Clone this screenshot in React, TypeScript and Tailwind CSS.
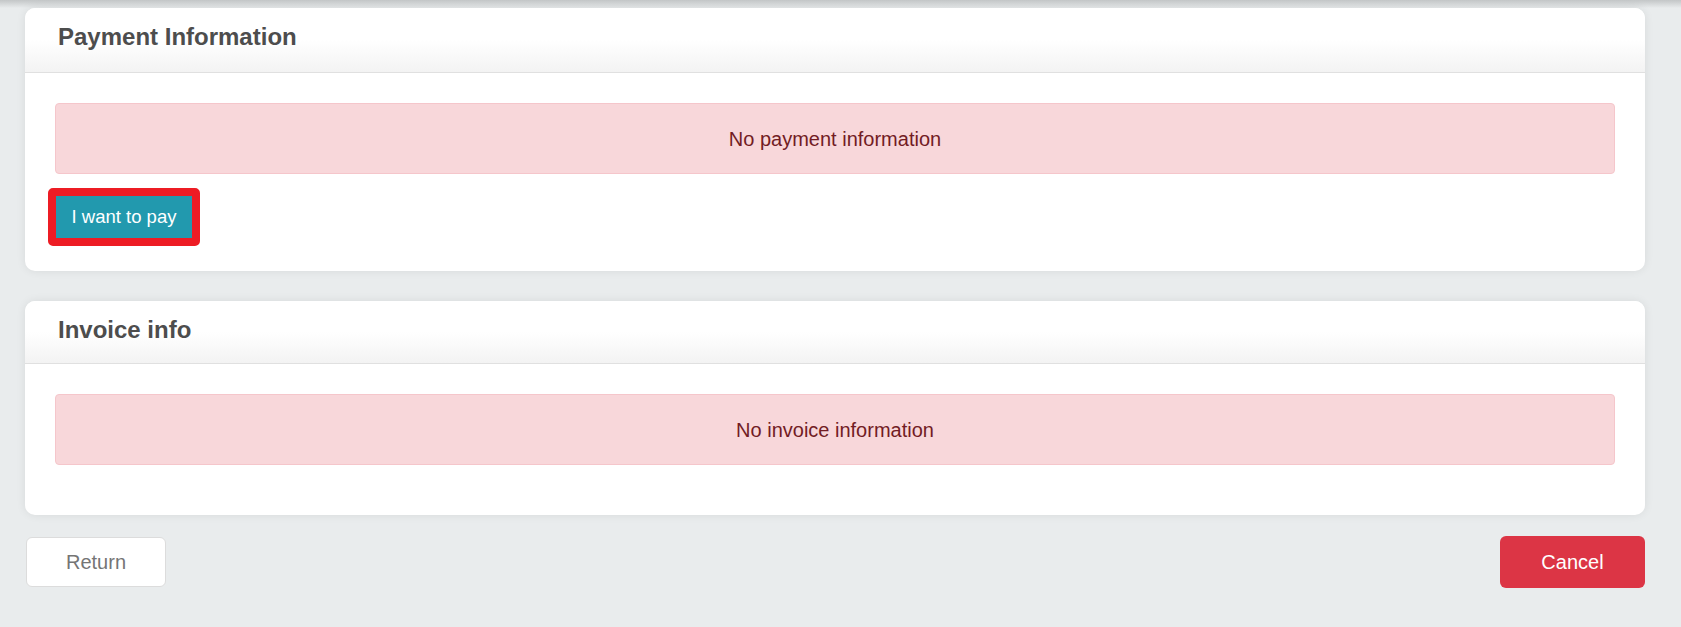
import React from 'react';

const font = { fontFamily: '"Liberation Sans", Arial, sans-serif' };

function CardHeader({ title, tall }: { title: string; tall?: boolean }) {
  return (
    <div
      className={`${tall ? 'h-[65px]' : 'h-[63px]'} rounded-t-[10px] border-b border-[#e0e0e0] bg-gradient-to-b from-white via-white to-[#f3f3f3] pl-[33px] pt-[15px]`}
    >
      <h2 className="text-[24px] leading-[28px] font-bold text-[#4d4d4d]">{title}</h2>
    </div>
  );
}

function Alert({ text }: { text: string }) {
  return (
    <div className="flex h-[71px] items-center justify-center rounded-[4px] border border-[#f5c6cb] bg-[#f8d7da] text-[20px] text-[#721c24]">
      {text}
    </div>
  );
}

export default function App() {
  return (
    <div className="min-h-[627px] bg-[#e9eced]" style={font}>
      <div className="h-[8px] bg-gradient-to-b from-[#c3c6c7] to-[#e9eced]" />
      <div className="flex flex-col pl-[25px] pr-[36px]">
        <section className="rounded-[10px] bg-white shadow-[0_0_10px_rgba(0,0,0,0.08)]">
          <CardHeader title="Payment Information" tall />
          <div className="px-[30px] pt-[30px] pb-[25px]">
            <Alert text="No payment information" />
            <div className="mt-[14px] ml-[-7px] inline-flex rounded-[5px] border-[8px] border-[#ed1c24]">
              <button className="h-[42px] w-[136px] bg-[#2299ae] text-[18.5px] text-white">
                I want to pay
              </button>
            </div>
          </div>
        </section>

        <section className="mt-[30px] rounded-[10px] bg-white shadow-[0_0_10px_rgba(0,0,0,0.08)]">
          <CardHeader title="Invoice info" />
          <div className="px-[30px] pt-[30px] pb-[50px]">
            <Alert text="No invoice information" />
          </div>
        </section>

        <div className="mt-[21px] flex items-center justify-between">
          <button className="ml-[1px] h-[50px] w-[140px] rounded-[6px] border border-[#dcdcdc] bg-white text-[20px] text-[#757575]">
            Return
          </button>
          <button className="h-[52px] w-[145px] rounded-[6px] bg-[#dc3545] text-[20px] text-white">
            Cancel
          </button>
        </div>
      </div>
    </div>
  );
}
